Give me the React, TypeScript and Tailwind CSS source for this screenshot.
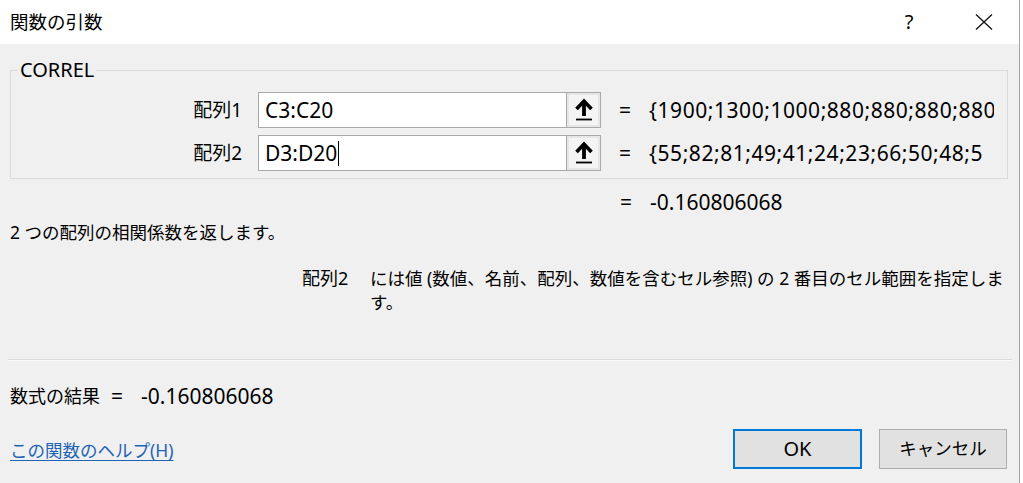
import React from "react";

function UpArrow() {
  return (
    <svg width="20" height="24" viewBox="0 0 20 24">
      <path d="M2.5 11 L10 3.2 L17.5 11" fill="none" stroke="#000" strokeWidth="3.6" strokeLinejoin="miter" />
      <path d="M10 4 V18" stroke="#000" strokeWidth="3.8" />
      <path d="M2 21.5 H18" stroke="#000" strokeWidth="1.8" />
    </svg>
  );
}

function Row({ label, value, result, caret }: { label: string; value: string; result: string; caret?: boolean }) {
  return (
    <div className="flex items-center h-[36px]">
      <div className="w-[231px] text-right text-[19px] leading-none">{label}</div>
      <div className="ml-[16px] flex h-[36px]">
        <div className="w-[309px] h-[36px] bg-white border border-[#a9a9a9] flex items-center pl-[6px] text-[21px] leading-none">
          <span>{value}</span>
          {caret ? <span className="inline-block w-[1px] h-[25px] bg-black ml-[1px]" /> : null}
        </div>
        <div className="w-[35px] h-[36px] -ml-[1px] border border-[#a9a9a9] bg-[#e6e6e6] flex items-center justify-center">
          <div className="w-[29px] h-[30px] bg-[#f4f4f4] flex items-center justify-center">
            <UpArrow />
          </div>
        </div>
      </div>
      <div className="ml-[18px] w-[30px] text-[21px] leading-none">=</div>
      <div className="w-[345px] overflow-hidden whitespace-nowrap text-[21px] leading-[26px] tracking-[0.55px]">{result}</div>
    </div>
  );
}

export default function App() {
  return (
    <div className="w-[1023px] h-[483px] bg-white flex font-['Noto_Sans','Noto_Sans_CJK_JP',sans-serif] text-black">
      <div className="w-[1020px] h-[483px] bg-[#f0f0f0] border-r border-[#a5a5a5] flex flex-col">
        {/* Title bar */}
        <div className="h-[44px] bg-white flex items-center pl-[10px] shrink-0">
          <span className="text-[18.5px] leading-none">関数の引数</span>
          <div className="flex-1" />
          <div className="w-[40px] h-[44px] flex items-center justify-center text-[20px] leading-none">?</div>
          <div className="ml-[26px] w-[57px] h-[44px] flex items-center justify-center">
            <svg width="18" height="16" viewBox="0 0 18 16">
              <path d="M1 0.5 L17 15.5 M17 0.5 L1 15.5" stroke="#111" strokeWidth="1.3" fill="none" />
            </svg>
          </div>
          <div className="w-[7px]" />
        </div>

        {/* Group box */}
        <div className="relative mt-[26px] ml-[10px] w-[998px] border border-[#dadada] pt-[21px] pb-[7px] flex flex-col gap-[7px]">
          <span className="absolute -top-[13px] left-[7px] px-[2px] bg-[#f0f0f0] text-[20px] leading-[24px]">CORREL</span>
          <Row label="配列1" value="C3:C20" result="{1900;1300;1000;880;880;880;880" />
          <Row label="配列2" value="D3:D20" result="{55;82;81;49;41;24;23;66;50;48;5" caret />
        </div>

        {/* formula result in group */}
        <div className="mt-[8px] h-[30px] flex items-center">
          <div className="ml-[620px] w-[30px] text-[21px] leading-none">=</div>
          <div className="text-[21px] leading-none">-0.160806068</div>
        </div>

        <div className="mt-[1px] h-[30px] flex items-center pl-[10px] text-[17.5px] leading-none">
          2 つの配列の相関係数を返します。
        </div>

        <div className="mt-[18px] flex text-[17.5px] leading-[24px]">
          <div className="ml-[302px] w-[68px] text-[18px]">配列2</div>
          <div className="w-[645px] whitespace-nowrap">
            には値 (数値、名前、配列、数値を含むセル参照) の 2 番目のセル範囲を指定しま
            <br />
            す。
          </div>
        </div>

        <div className="mt-[45px] ml-[8px] mr-[7px] border-t border-[#dcdcdc] border-b border-b-[#fafafa]" />

        <div className="mt-[20px] h-[30px] flex items-center pl-[10px] leading-none">
          <span className="text-[18px]">数式の結果</span>
          <span className="ml-[11px] text-[21px]">=</span>
          <span className="ml-[18px] text-[21px]">-0.160806068</span>
        </div>

        <div className="mt-[18px] h-[40px] flex items-center pl-[10px] pr-[12px]">
          <a className="text-[17.5px] leading-none text-[#1f65b4] underline underline-offset-[3px] mt-[4px]">
            この関数のヘルプ(H)
          </a>
          <div className="flex-1" />
          <button className="w-[129px] h-[40px] border-2 border-[#0078d7] bg-[#e1e1e1] text-[20px] leading-none flex items-center justify-center">
            OK
          </button>
          <button className="ml-[17px] w-[128px] h-[40px] border border-[#adadad] bg-[#e1e1e1] text-[17.5px] leading-none flex items-center justify-center">
            キャンセル
          </button>
        </div>
      </div>
    </div>
  );
}
